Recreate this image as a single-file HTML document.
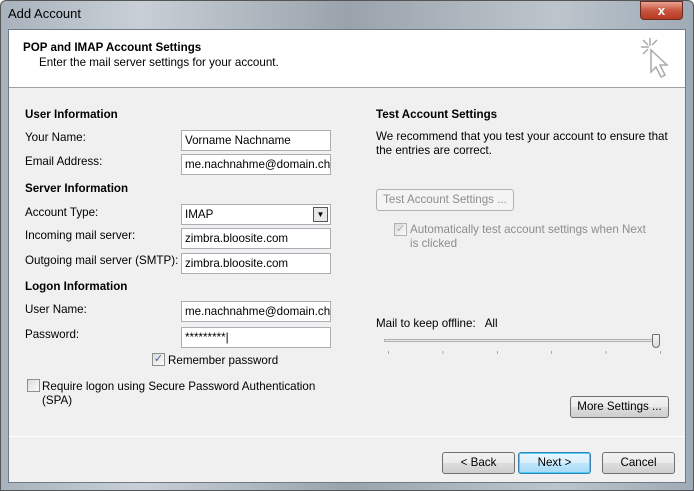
<!DOCTYPE html>
<html><head><style>
*{margin:0;padding:0;box-sizing:border-box}
body{width:694px;height:491px;overflow:hidden;font-family:"Liberation Sans",sans-serif;font-size:11.6px;color:#000;position:relative;background:#fff}
.frame{position:absolute;left:0;top:0;width:694px;height:491px;background:linear-gradient(90deg,#a9b3bd 0%,#c8cfd6 20%,#9aa3ac 50%,#bdc5cc 80%,#9eaab6 100%);border:1px solid #555;border-radius:6px 6px 0 0}
.title{position:absolute;left:8px;top:6px;font-size:13px;color:#000}
.close{position:absolute;left:640px;top:1px;width:43px;height:19px;border:1px solid #6b2a1f;border-radius:0 0 4px 4px;background:linear-gradient(#e8a493,#c8553f 50%,#b83a22);color:#fff;font-weight:bold;text-align:center;font-size:13px;line-height:17px}
.client{position:absolute;left:8px;top:29px;width:678px;height:454px;background:#f0f0f0;border:1px solid #6f7a86}
.hdr{position:absolute;left:0;top:0;width:676px;height:58px;background:#fff;border-bottom:1px solid #a0a0a0}
.a{position:absolute;white-space:nowrap}
.b{font-weight:bold}
.in{position:absolute;left:172px;width:150px;height:21px;background:#fff;border:1px solid #abadb3;padding:3px 0 0 3px;font-size:11.6px}
.btn{position:absolute;height:22px;border:1px solid #707070;border-radius:3px;background:linear-gradient(#f2f2f2,#ebebeb 50%,#dddddd 51%,#cfcfcf);text-align:center;line-height:20px}
.cb{position:absolute;width:13px;height:13px;border:1px solid #8e8f8f;background:linear-gradient(135deg,#dcdcdc,#fbfbfb)}
</style></head><body>
<div class="frame"></div>
<div class="title">Add Account</div>
<div class="close">x</div>
<div class="client">
 <div class="hdr">
  <div class="a b" style="left:14px;top:11px">POP and IMAP Account Settings</div>
  <div class="a" style="left:30px;top:26px">Enter the mail server settings for your account.</div>
  <svg class="a" style="left:628px;top:6px" width="36" height="50" viewBox="0 0 36 50"><g stroke="#aaa" stroke-width="1.5" fill="none"><path d="M13 2v8M4 11h8M6 4l5 5M20 4l-5 5M6 18l5-5"/><path d="M14 14l0 22 5-5 5 10 4-2-5-10 7 0z" fill="#fff"/></g></svg>
 </div>
 <div class="a b" style="left:16px;top:78px">User Information</div>
 <div class="a" style="left:16px;top:101px">Your Name:</div>
 <div class="in" style="top:100px">Vorname Nachname</div>
 <div class="a" style="left:16px;top:125px">Email Address:</div>
 <div class="in" style="top:124px">me.nachnahme@domain.ch</div>
 <div class="a b" style="left:16px;top:152px">Server Information</div>
 <div class="a" style="left:16px;top:176px">Account Type:</div>
 <div class="in" style="top:174px">IMAP<div style="position:absolute;right:2px;top:2px;width:15px;height:15px;border:1px solid #555;background:#e8e8e8;text-align:center;font-size:8px;line-height:14px">▼</div></div>
 <div class="a" style="left:16px;top:199px">Incoming mail server:</div>
 <div class="in" style="top:198px">zimbra.bloosite.com</div>
 <div class="a" style="left:16px;top:224px">Outgoing mail server (SMTP):</div>
 <div class="in" style="top:223px">zimbra.bloosite.com</div>
 <div class="a b" style="left:16px;top:250px">Logon Information</div>
 <div class="a" style="left:16px;top:273px">User Name:</div>
 <div class="in" style="top:271px">me.nachnahme@domain.ch</div>
 <div class="a" style="left:16px;top:298px">Password:</div>
 <div class="in" style="top:297px">*********|</div>
 <div class="cb" style="left:143px;top:323px;color:#4a5f97;font-size:11px;line-height:11px;text-align:center">✓</div>
 <div class="a" style="left:159px;top:324px">Remember password</div>
 <div class="cb" style="left:18px;top:349px"></div>
 <div class="a" style="left:33px;top:350px">Require logon using Secure Password Authentication</div>
 <div class="a" style="left:33px;top:364px">(SPA)</div>

 <div class="a b" style="left:367px;top:78px">Test Account Settings</div>
 <div class="a" style="left:367px;top:100px">We recommend that you test your account to ensure that</div>
 <div class="a" style="left:367px;top:114px">the entries are correct.</div>
 <div class="btn" style="left:367px;top:159px;width:138px;border-color:#adb2b5;background:#f4f4f4;color:#8d8d8d">Test Account Settings ...</div>
 <div class="cb" style="left:385px;top:193px;border-color:#b1b1b1;color:#aaa;font-size:11px;line-height:11px;text-align:center">✓</div>
 <div class="a" style="left:401px;top:193px;color:#8d8d8d">Automatically test account settings when Next</div>
 <div class="a" style="left:401px;top:207px;color:#8d8d8d">is clicked</div>
 <div class="a" style="left:367px;top:287px">Mail to keep offline:&nbsp;&nbsp; All</div>
 <div class="a" style="left:375px;top:309px;width:276px;height:3px;border:1px solid #b0b0b0;background:#e7eaea"></div>
 <div class="a" style="left:643px;top:304px;width:8px;height:14px;border:1px solid #707070;border-radius:1px 1px 4px 4px;background:linear-gradient(#f4f4f4,#dcdcdc)"></div>
 <div class="a" style="left:379px;top:321px;width:274px;height:3px;background:repeating-linear-gradient(90deg,#aaa 0 1px,transparent 1px 54.4px)"></div>
 <div class="btn" style="left:561px;top:366px;width:99px">More Settings ...</div>
 <div class="a" style="left:0;top:406px;width:676px;height:1px;background:#a0a0a0;border-bottom:1px solid #fff"></div>
 <div class="btn" style="left:433px;top:422px;width:73px">&lt; Back</div>
 <div class="btn" style="left:509px;top:422px;width:73px;border-color:#3c7fb1;box-shadow:inset 0 0 0 1px #48d0f8;background:linear-gradient(#eaf6fd,#d9f0fc 50%,#bee6fd 51%,#a7d9f5)">Next &gt;</div>
 <div class="btn" style="left:593px;top:422px;width:73px">Cancel</div>
</div>
</body></html>
